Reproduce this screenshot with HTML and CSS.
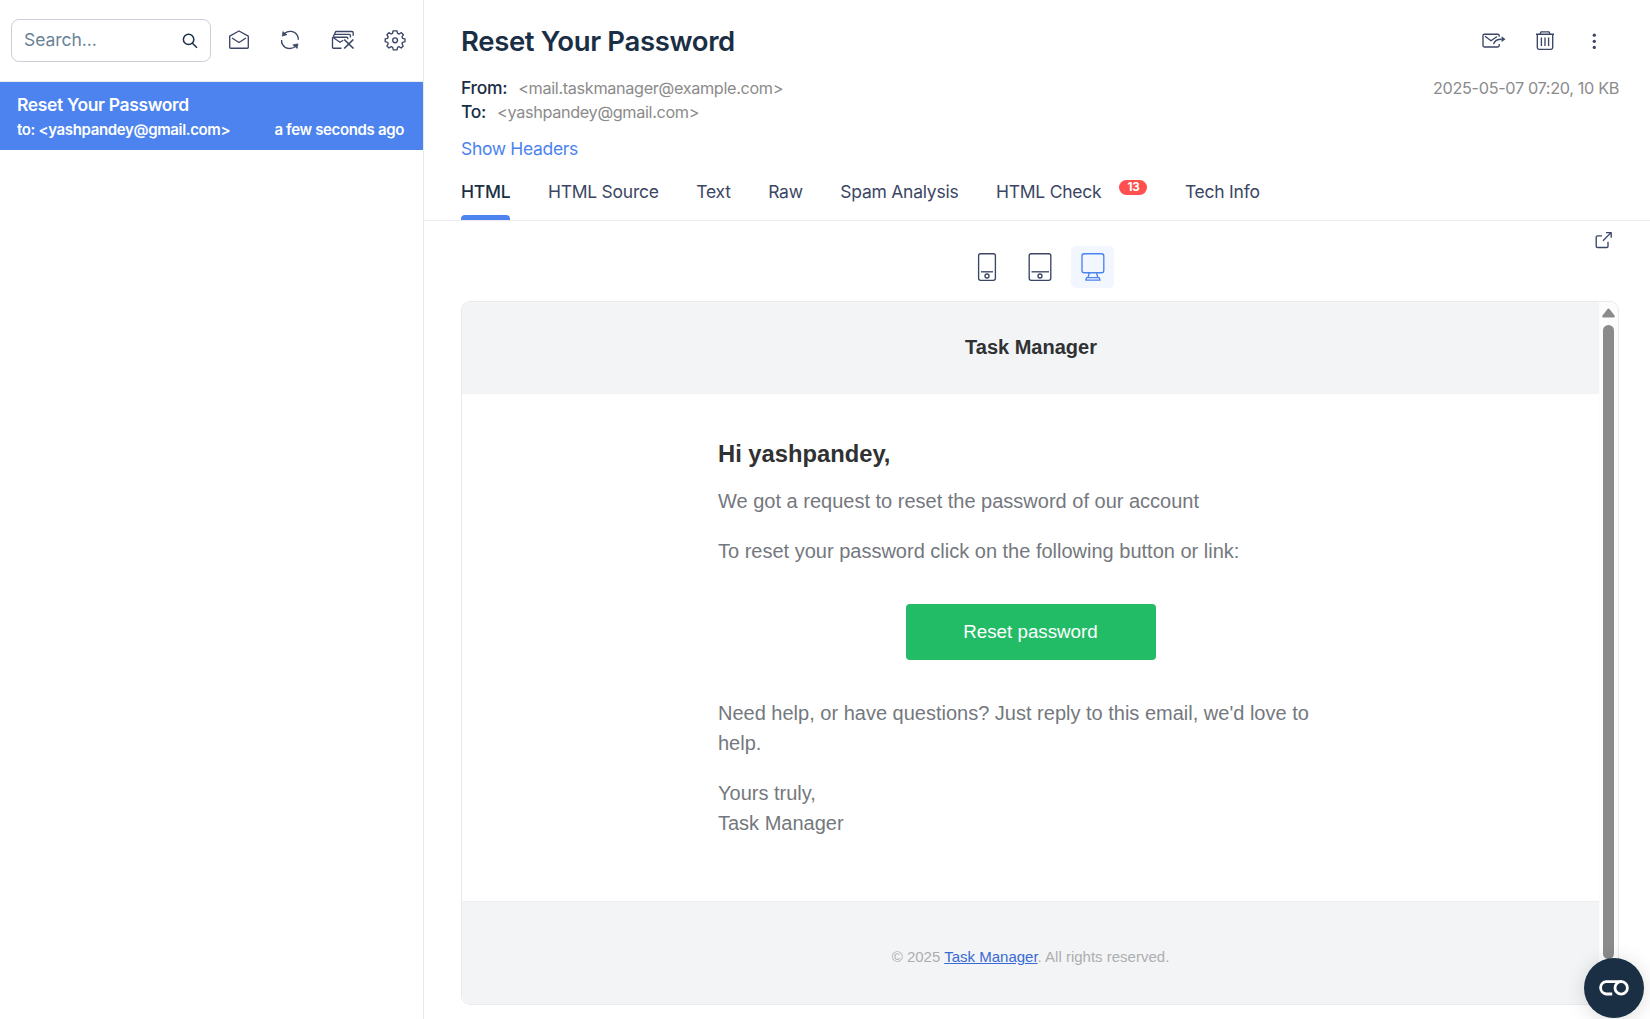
FILE: index.html
```html
<!DOCTYPE html>
<html lang="en">
<head>
<meta charset="utf-8">
<title>Reset Your Password</title>
<link rel="stylesheet" href="styles.css">
</head>
<body>
<div class="app">
  <aside class="sidebar">
    <div class="toolbar">
      <div class="search">
        <span class="search-label">Search...</span>
        <svg class="search-icon" width="16" height="16" viewBox="0 0 16 16"><circle cx="6.6" cy="6.4" r="5.2"/><path d="M10.4 10.2L15 14.8"/></svg>
      </div>
      <div class="tools">
        <svg class="icon" width="22" height="22" viewBox="0 0 22 22"><path d="M1.7 7.2L11 2L20.3 7.2V18.2Q20.3 19.2 19.3 19.2H2.7Q1.7 19.2 1.7 18.2ZM4 9L11 13.5L18 9"/></svg>
        <svg class="icon" width="22" height="22" viewBox="0 0 22 22"><path d="M5.5 4.4C9.5 1.1 15.5 1.9 18.2 6.2C19.1 7.6 19.4 9.1 19.3 10.8M16.2 17.5C12.2 20.8 6.2 19.9 3.6 15.6C2.7 14.2 2.4 12.7 2.6 11"/><path class="solid" d="M3.8 2.4L8 5.8L3.1 7.2ZM13.7 15.8L19 14.8L18.3 19.6Z"/></svg>
        <svg class="icon" width="24" height="22" viewBox="0 0 24 22"><path d="M10.5 19.2H2.5Q1.5 19.2 1.5 18.2V9.2Q1.5 8.2 2.5 8.2H15.8Q16.8 8.2 16.8 9.2V10.2M2.5 8.8L9 13.2L12.2 11.2M2.3 7.6L3.4 5.3H18.3Q19.4 5.3 19.4 6.4V8.6M3.6 5L4.7 2.5H21Q22.2 2.5 22.2 3.7V6.7"/><path class="bold" d="M13.2 10.5L22.5 19.5M22.3 10.5L13.2 19.5"/></svg>
        <svg class="icon" width="22" height="22" viewBox="0 0 22 22"><path d="M9 1.8H13L13.6 4.4L15.1 5L17.4 3.6L19.4 5.7L18 7.8L18.6 9.3L21 9.9V12.7L18.6 13.3L18 14.8L19.2 17L17.2 19L15 17.7L13.6 18.3L13 20.9H9.3L8.7 18.3L7.2 17.7L5 19L2.9 17L4.2 14.8L3.6 13.3L1.2 12.7V9.9L3.6 9.3L4.2 7.8L2.9 5.7L4.9 3.7L7.1 5L8.5 4.4Z"/><circle cx="11.1" cy="11.3" r="2.4"/></svg>
      </div>
    </div>
    <div class="message">
      <div class="message-title">Reset Your Password</div>
      <div class="message-meta"><span>to: &lt;yashpandey@gmail.com&gt;</span><span>a few seconds ago</span></div>
    </div>
  </aside>
  <main class="content">
    <header class="mail-header">
      <div class="title-row">
        <h1>Reset Your Password</h1>
        <div class="actions">
          <svg class="icon" width="25" height="22" viewBox="0 0 25 22"><path d="M18.2 6.8V5.6Q18.2 4.2 16.8 4.2H3.4Q2 4.2 2 5.6V15.6Q2 17 3.4 17H16.8Q18.2 17 18.2 15.6V14M4 6.3L10 10.8L16 6.5M12.6 14.1C13.5 10.8 16 9.2 20.5 9.2"/><path class="solid" d="M20.8 6.8L24.2 9.2L20.8 11.6Z"/></svg>
          <svg class="icon" width="22" height="22" viewBox="0 0 22 22"><path d="M2 4.2H20M6 4L7 1.8H15L16 4M3.3 4.2V17.6Q3.3 19.4 5 19.4H17Q18.7 19.4 18.7 17.6V4.2M7.4 7.6V16M11 7.6V16M14.6 7.6V16"/></svg>
          <svg class="icon" width="22" height="22" viewBox="0 0 22 22"><g class="dots"><circle cx="11.3" cy="5.2" r="1.65"/><circle cx="11.3" cy="11.3" r="1.65"/><circle cx="11.3" cy="17.4" r="1.65"/></g></svg>
        </div>
      </div>
      <div class="info-row">
        <div class="addresses">
          <div class="address"><span>From:</span><span class="muted">&lt;mail.taskmanager@example.com&gt;</span></div>
          <div class="address"><span>To:</span><span class="muted">&lt;yashpandey@gmail.com&gt;</span></div>
        </div>
        <div class="muted">2025-05-07 07:20, 10 KB</div>
      </div>
      <a class="show-headers">Show Headers</a>
    </header>
    <nav class="tabs">
      <a class="tab active">HTML</a>
      <a class="tab">HTML Source</a>
      <a class="tab">Text</a>
      <a class="tab">Raw</a>
      <a class="tab">Spam Analysis</a>
      <a class="tab">HTML Check<span class="badge">13</span></a>
      <a class="tab">Tech Info</a>
    </nav>
    <section class="preview">
      <svg class="icon open-icon" width="18" height="18" viewBox="0 0 18 18"><path d="M7 4.8H2.5Q1.2 4.8 1.2 6V15.3Q1.2 16.5 2.5 16.5H11.8Q13 16.5 13 15.3V10.8M8 9.8L16 1.6M11 1.6H16.2V6.8"/></svg>
      <div class="devices">
        <div class="device"><svg class="icon" width="22" height="30" viewBox="0 0 22 30"><rect x="2.6" y="1.7" width="16.8" height="26.6" rx="2"/><path d="M5 19.8H17"/><circle cx="11" cy="24" r="2"/></svg></div>
        <div class="device"><svg class="icon" width="26" height="30" viewBox="0 0 26 30"><rect x="2.2" y="1.7" width="21.6" height="26.6" rx="2"/><path d="M4.5 19.8H22"/><circle cx="13" cy="24" r="2"/></svg></div>
        <div class="device selected"><svg class="icon" width="26" height="30" viewBox="0 0 26 30"><rect x="2" y="1.7" width="21.8" height="19" rx="2.2"/><path d="M9.3 20.8L8 25.5M16.5 20.8L17.8 25.5M6.6 25.6H19.2L20 28.1H5.8Z"/></svg></div>
      </div>
      <div class="frame">
        <div class="email">
          <div class="email-head">Task Manager</div>
          <div class="email-body">
            <h2>Hi yashpandey,</h2>
            <p>We got a request to reset the password of our account</p>
            <p>To reset your password click on the following button or link:</p>
            <a class="button">Reset password</a>
            <p>Need help, or have questions? Just reply to this email, we'd love to help.</p>
            <p>Yours truly,<br>Task Manager</p>
          </div>
          <div class="email-foot">© 2025 <a>Task Manager</a>. All rights reserved.</div>
        </div>
        <div class="scrollbar">
          <svg width="13" height="10" viewBox="0 0 13 10"><path fill="#8b8b8b" d="M5.5 1Q6.5 0 7.5 1L12.5 7.5Q13.3 9.5 11.5 9.5H1.5Q-.3 9.5 .5 7.5Z"/></svg>
          <div class="thumb"></div>
        </div>
      </div>
    </section>
  </main>
</div>
<div class="widget"><svg width="32" height="18" viewBox="0 0 32 18"><path d="M14.2 15H8A6.2 6.2 0 0 1 8 2.7H24"/><circle cx="23.2" cy="8.9" r="6.2"/></svg></div>
</body>
</html>
```
FILE: styles.css
```css
* { box-sizing: border-box; }
body {
  margin: 0;
  height: 1019px;
  overflow: hidden;
  background: #fff;
  color: #1a2e44;
  font-family: Inter, "Liberation Sans", sans-serif;
}
.app { display: flex; height: 1019px; }
.sidebar { width: 424px; flex: none; border-right: 1px solid #e9e9ec; }
.toolbar {
  height: 82px;
  padding: 19px 17px 0 11px;
  display: flex;
  justify-content: space-between;
  border-bottom: 1px solid #ececf0;
}
.search {
  width: 200px;
  height: 43px;
  padding: 0 12px;
  display: flex;
  align-items: center;
  justify-content: space-between;
  border: 1px solid #cdced8;
  border-radius: 8px;
}
.search-label { padding-bottom: 2px; color: #6a8296; font-size: 17.5px; letter-spacing: -.05px; }
.search-icon { fill: none; stroke: #1a2e44; stroke-width: 1.5; }
.tools {
  width: 178px;
  height: 41px;
  display: flex;
  align-items: center;
  justify-content: space-between;
}
.icon { display: block; fill: none; stroke: #3b4664; stroke-width: 1.35; stroke-linejoin: round; }
.solid { fill: #3b4664; stroke-width: .5; }
.bold { stroke-width: 1.7; }
.dots { fill: #3b4664; stroke: none; }
.message {
  height: 68px;
  padding: 11px 19px 0 17px;
  background: #4c83ee;
  color: #fff;
  font-weight: 600;
}
.message-title { font-size: 17.5px; line-height: 24px; letter-spacing: -.35px; }
.message-meta {
  display: flex;
  justify-content: space-between;
  font-size: 15px;
  line-height: 26px;
  letter-spacing: -.35px;
}
.content { flex: 1; min-width: 0; }
.mail-header { height: 170px; padding: 22px 31px 0 37px; }
.title-row { height: 38px; display: flex; justify-content: space-between; }
h1 { margin: 0; font-size: 27.5px; line-height: 38px; font-weight: 600; letter-spacing: -.35px; }
.actions { display: flex; align-items: center; gap: 27.5px; padding-right: 14px; }
.info-row { display: flex; justify-content: space-between; margin-top: 16px; font-size: 17.5px; line-height: 24px; }
.address { display: flex; gap: 11px; font-weight: 500; letter-spacing: -.3px; }
.muted { color: #8b8b8b; font-weight: 400; font-size: 16.25px; letter-spacing: -.35px; }
.show-headers { display: block; margin-top: 12px; color: #4c83ee; font-size: 17.5px; line-height: 26px; letter-spacing: -.33px; }
.tabs {
  height: 51px;
  padding-left: 37px;
  display: flex;
  gap: 37.5px;
  border-bottom: 1px solid #ececf0;
}
.tab {
  position: relative;
  display: flex;
  height: 50px;
  padding-bottom: 8px;
  align-items: center;
  color: #3b4664;
  font-size: 17.5px;
  letter-spacing: -.24px;
}
.active { color: #1a2e44; font-weight: 500; }
.active::after {
  content: "";
  position: absolute;
  left: 0;
  right: 0;
  bottom: 0;
  height: 5px;
  border-radius: 4px 4px 0 0;
  background: #4c83ee;
}
.badge {
  margin: -8px 0 0 18px;
  width: 28px;
  height: 15px;
  border-radius: 8px;
  background: #ff4f4f;
  color: #fff;
  font-size: 11.5px;
  font-weight: 700;
  line-height: 15px;
  text-align: center;
}
.preview { position: relative; padding: 25px 31px 0 37px; }
.open-icon { position: absolute; right: 37px; top: 10px; }
.devices { display: flex; gap: 10px; justify-content: center; padding-right: 1px; }
.device {
  width: 43px;
  height: 42px;
  display: flex;
  align-items: center;
  justify-content: center;
  border-radius: 5px;
}
.selected { background: #f1f6ff; }
.selected .icon { stroke: #4c83ee; }
.frame {
  margin-top: 13px;
  height: 704px;
  display: flex;
  border: 1px solid #eaeaed;
  border-radius: 9px;
  overflow: hidden;
}
.email { flex: 1; font-family: "Liberation Sans", Arial, sans-serif; color: #74787e; }
.email-head {
  height: 92px;
  padding-left: 1px;
  line-height: 90px;
  background: #f2f4f6;
  color: #2f3133;
  font-size: 20px;
  font-weight: 700;
  text-align: center;
}
.email-body { width: 625px; height: 507px; margin: 0 auto; padding-top: 45px; font-size: 20px; line-height: 30px; }
h2 { margin: 0 0 17px; color: #2f3133; font-size: 23.75px; line-height: 30px; }
p { margin: 0 0 20px; }
.button {
  display: block;
  width: 250px;
  height: 56px;
  margin: 38px auto 38px;
  border-radius: 4px;
  background: #22bc66;
  color: #fff;
  font-size: 18.75px;
  line-height: 56px;
  text-align: center;
}
.email-foot {
  height: 103px;
  border-top: 1px solid #edeff2;
  background: #f2f4f6;
  color: #aeaeae;
  font-size: 15px;
  line-height: 110px;
  text-align: center;
}
.email-foot a { color: #3869d4; text-decoration: underline; }
.scrollbar {
  width: 19px;
  padding-top: 6px;
  display: flex;
  flex-direction: column;
  align-items: center;
  gap: 7px;
  background: #fcfcfc;
}
.thumb { width: 11px; height: 634px; border-radius: 6px; background: #8b8b8b; }
.widget {
  position: absolute;
  left: 1584px;
  top: 958px;
  width: 60px;
  height: 60px;
  display: flex;
  align-items: center;
  justify-content: center;
  border-radius: 50%;
  background: #1a2e44;
  box-shadow: 0 2px 20px rgba(0, 0, 0, .14);
}
.widget svg { fill: none; stroke: #fff; stroke-width: 2.8; }
```
